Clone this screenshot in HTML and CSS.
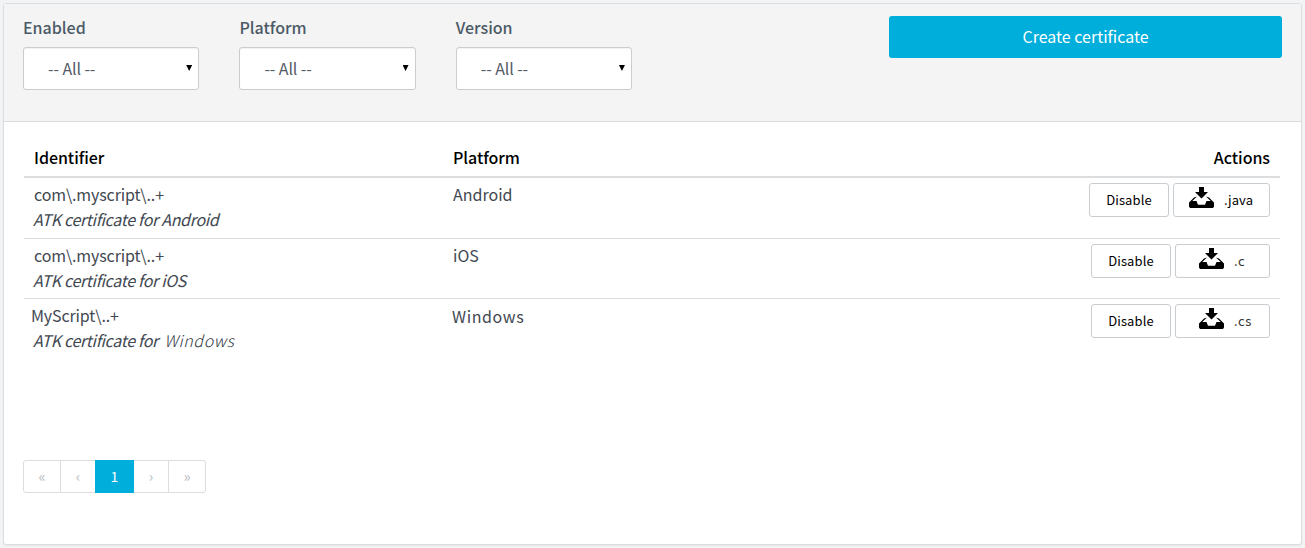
FILE: index.html
```html
<!DOCTYPE html>
<html lang="en">
<head>
<meta charset="utf-8">
<title>Certificates</title>
<link rel="stylesheet" href="styles.css">
</head>
<body>
<svg class="sprite" width="0" height="0"><symbol id="download" viewBox="0 0 25 21"><path d="M10 0h5v5h4L12.500 11.500 6 5h4z"/><path d="M5 10.500L8 9.500 3.300 14H7.500L9 17.800h7l1.500-3.800h4.200L17 9.500l3 1L25 15.500v4L24 21H1L0 19.500V15.500z"/></symbol></svg>
<main class="panel">
  <header class="filters">
    <div class="field"><span class="label">Enabled</span><div class="select"><span>-- All --</span><i class="caret"></i></div></div>
    <div class="field"><span class="label">Platform</span><div class="select"><span>-- All --</span><i class="caret"></i></div></div>
    <div class="field"><span class="label">Version</span><div class="select"><span>-- All --</span><i class="caret"></i></div></div>
    <button class="create">Create certificate</button>
  </header>
  <section class="table">
    <div class="row head"><div>Identifier</div><div>Platform</div><div class="right">Actions</div></div>
    <div class="row">
      <div class="cell"><div class="id">com\.myscript\..+</div><em>ATK certificate for Android</em></div>
      <div class="cell">Android</div>
      <div class="actions"><button class="btn">Disable</button><button class="btn java"><svg class="icon"><use href="#download"/></svg><span>.java</span></button></div>
    </div>
    <div class="row second">
      <div class="cell"><div class="id">com\.myscript\..+</div><em>ATK certificate for iOS</em></div>
      <div class="cell">iOS</div>
      <div class="actions"><button class="btn">Disable</button><button class="btn file"><svg class="icon"><use href="#download"/></svg><span>.c</span></button></div>
    </div>
    <div class="row last">
      <div class="cell"><div class="id shifted">MyScript\..+</div><em>ATK certificate for <span class="light">Windows</span></em></div>
      <div class="cell windows">Windows</div>
      <div class="actions"><button class="btn">Disable</button><button class="btn file"><svg class="icon"><use href="#download"/></svg><span>.cs</span></button></div>
    </div>
  </section>
  <nav class="pages"><span>«</span><span>‹</span><span class="active">1</span><span>›</span><span>»</span></nav>
</main>
</body>
</html>
```
FILE: styles.css
```css
* { box-sizing: border-box; }
body {
  margin: 0;
  padding: 3px;
  height: 548px;
  background: #f3f4f6;
  color: #424851;
  font: 16px/25px "Noto Sans CJK SC", "Open Sans", sans-serif;
  overflow: hidden;
}
button { font-family: inherit; }
.sprite { display: block; }
.panel {
  width: 1299px;
  height: 542px;
  border: 1px solid #dcdddf;
  border-radius: 3px;
  background: #fff;
  box-shadow: 0 1px 2px rgba(0, 0, 0, .06);
}
.filters {
  display: flex;
  align-items: flex-start;
  gap: 40.2px;
  height: 118px;
  padding: 11px 19px;
  background: #f4f4f4;
  border-bottom: 1px solid #dcdddf;
}
.field { width: 176.2px; }
.label { display: block; height: 32px; color: #4b5a66; font-weight: 500; }
.select {
  display: flex;
  align-items: center;
  justify-content: space-between;
  height: 43px;
  padding: 0 6px 0 24px;
  border: 1px solid #ccc;
  border-radius: 3px;
  background: #fff;
  box-shadow: inset 0 1px 1px rgba(0, 0, 0, .06);
  color: #555b66;
  letter-spacing: -.1px;
}
.caret { width: 6px; height: 6px; margin-bottom: 1px; background: #000; clip-path: polygon(0 0, 100% 0, 50% 100%); }
.create {
  width: 393px;
  height: 42px;
  margin: 1px 0 0 auto;
  padding: 0 0 2px;
  border: 0;
  border-radius: 3px;
  background: #00aedb;
  color: #fff;
  font-size: 16px;
}
.table { height: 338px; padding: 18px 21px 0 20px; }
.row {
  display: grid;
  grid-template-columns: 419px 1fr 300px;
  height: 61px;
  padding: 5px 10px 0;
  border-bottom: 1px solid #dcdddf;
}
.second { height: 60px; }
.last { border: 0; }
.head { height: 38px; border-bottom-width: 2px; color: #000; font-weight: 500; letter-spacing: -.05px; }
.right { text-align: right; }
.cell { margin-top: -1px; }
.id { letter-spacing: -.13px; }
em { display: block; margin-left: -1px; letter-spacing: -.32px; }
.light { margin-left: 3px; font-weight: 300; letter-spacing: .6px; color: #30363e; }
.shifted { margin-left: -3px; }
.cell.windows { margin: 0 0 0 -1px; letter-spacing: .6px; }
.actions { display: flex; justify-content: flex-end; gap: 4px; }
.btn {
  display: flex;
  align-items: center;
  justify-content: center;
  width: 80px;
  height: 34px;
  padding: 0 0 2px;
  border: 1px solid #c9cdd1;
  border-radius: 3px;
  background: #fff;
  color: #000;
  font-size: 13px;
  letter-spacing: .1px;
}
.icon { width: 25px; height: 21px; margin-bottom: 3px; }
.java { width: 97px; gap: 10px; padding-right: 1px; }
.file { width: 95px; justify-content: flex-start; padding-left: 23px; gap: 10px; color: #333; letter-spacing: .6px; }
.file .icon { fill: #000; }
.pages { display: flex; width: 183px; height: 33px; margin-left: 19px; border: 1px solid #ddd; border-radius: 3px; color: #b9bdc2; font-size: 15px; line-height: 30px; text-align: center; }
.pages span { width: 37px; border-left: 1px solid #ddd; }
.pages span:first-child { border: 0; width: 36px; }
.pages span:nth-child(2) { width: 35px; }
.pages .active { width: 39px; height: 33px; margin-top: -1px; border: 0; background: #00aedb; color: #fff; font-size: 14px; line-height: 33px; }
.pages span:nth-child(4) { width: 34px; border: 0; }
```
